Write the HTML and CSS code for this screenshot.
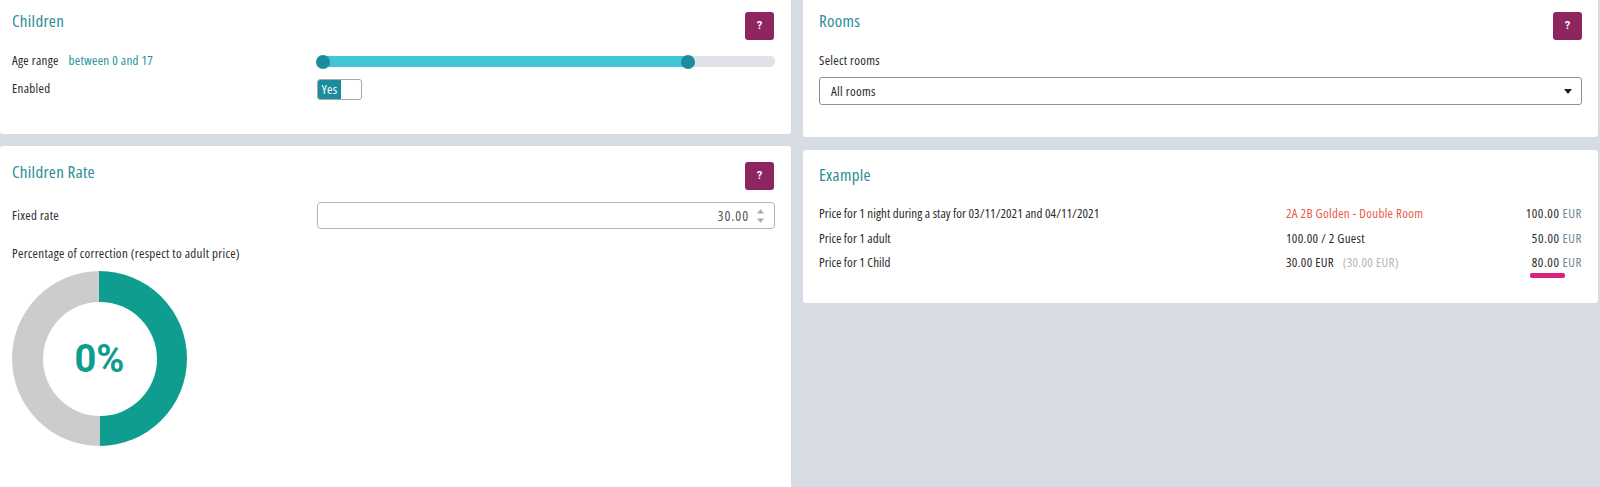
FILE: index.html
```html
<!DOCTYPE html>
<html lang="en">
<head>
<meta charset="utf-8">
<title>Children settings</title>
<link rel="stylesheet" href="styles.css">
</head>
<body>
<main class="page">
  <div class="col col-left">
    <section class="card card-children">
      <header class="card-head">
        <h2 class="card-title">Children</h2>
        <button class="help" type="button">?</button>
      </header>
      <div class="row row-age">
        <div class="row-label">Age range <span class="accent">between 0 and 17</span></div>
        <div class="slider"><div class="slider-fill"><span class="knob knob-start"></span><span class="knob knob-end"></span></div></div>
      </div>
      <div class="row row-enabled">
        <div class="row-label">Enabled</div>
        <div class="toggle"><span class="toggle-on">Yes</span></div>
      </div>
    </section>
    <section class="card card-rate">
      <header class="card-head">
        <h2 class="card-title">Children Rate</h2>
        <button class="help" type="button">?</button>
      </header>
      <div class="row row-fixed">
        <div class="row-label">Fixed rate</div>
        <div class="number-input"><span class="number-value">30.00</span>
          <svg class="spinner" width="9" height="16" viewBox="0 0 9 16"><path d="M4.5 1 8 5.5H1z" fill="#a9adb3"/><path d="M1 10.500H8L4.500 15z" fill="#a9adb3"/></svg>
        </div>
      </div>
      <p class="pct-label">Percentage of correction (respect to adult price)</p>
      <div class="donut"><div class="donut-hole">0%</div></div>
    </section>
  </div>
  <div class="col col-right">
    <section class="card card-rooms">
      <header class="card-head">
        <h2 class="card-title">Rooms</h2>
        <button class="help" type="button">?</button>
      </header>
      <div class="rooms-label">Select rooms</div>
      <div class="select"><span>All rooms</span>
        <svg class="caret" width="8" height="5" viewBox="0 0 8 5"><path d="M0 0H8L4 5z" fill="#222"/></svg>
      </div>
    </section>
    <section class="card card-example">
      <h2 class="card-title">Example</h2>
      <div class="price-grid">
        <div class="desc">Price for 1 night during a stay for 03/11/2021 and 04/11/2021</div>
        <div class="mid room">2A 2B Golden - Double Room</div>
        <div class="amount">100.00 <span class="cur">EUR</span></div>
        <div class="desc">Price for 1 adult</div>
        <div class="mid">100.00 / 2 Guest</div>
        <div class="amount">50.00 <span class="cur">EUR</span></div>
        <div class="desc">Price for 1 Child</div>
        <div class="mid">30.00 EUR <span class="muted">(30.00 EUR)</span></div>
        <div class="amount"><span class="marked">80.00</span> <span class="cur">EUR</span></div>
      </div>
    </section>
  </div>
</main>
</body>
</html>
```
FILE: styles.css
```css
* { box-sizing: border-box; }
html, body { margin: 0; height: 100%; }
body {
  background: #d7dbe3;
  color: #2b2b2b;
  font-family: "Open Sans", "Liberation Sans", sans-serif;
  font-stretch: condensed;
  font-size: 13px;
  letter-spacing: 0.3px;
  overflow: hidden;
}
.page { display: flex; gap: 12px; height: 487px; padding-right: 2px; }
.col { display: flex; flex-direction: column; }
.col-left { width: 791px; gap: 12px; }
.col-right { width: 795px; gap: 13px; }
.card { background: #fff; border-radius: 0 0 3px 3px; }
.card-children { height: 134px; padding: 12px 15px 0 12px; }
.card-rate { flex: 1; padding: 16px 15px 0 12px; border-radius: 3px 3px 0 0; }
.card-rooms { height: 137px; padding: 12px 16px 0 16px; }
.card-example { height: 153px; padding: 14px 16px 0 16px; border-radius: 3px; }
.card-head { display: flex; justify-content: space-between; align-items: flex-start; }
.card-children .help, .card-rate .help { margin-right: 2px; }
.card-title { margin: 0; font-weight: 400; font-size: 17px; line-height: 21px; color: #2a8d96; }
.card-children .card-title, .card-rooms .card-title { margin-top: -2px; }
.card-rate .card-title { margin-top: -1px; }
.help {
  width: 29px; height: 28px; padding: 0;
  border: 0; border-radius: 3px;
  background: #8f2560; color: #fff;
  font: 700 11px/28px "Roboto", sans-serif;
}
.row { display: flex; align-items: center; }
.row-label { width: 305px; padding-bottom: 2px; }
.accent { margin-left: 7px; color: #23909a; }
.row-age { height: 24px; margin-top: 9px; }
.row-enabled { height: 24px; margin-top: 4px; }
.slider { width: 458px; height: 11px; background: #dfe2e8; border-radius: 5px; }
.slider-fill { position: relative; width: 371px; height: 100%; background: #40c4d6; border-radius: 5px 0 0 5px; }
.knob { position: absolute; top: -1px; width: 14px; height: 14px; border-radius: 50%; background: #1c8b9b; }
.knob-start { left: -1px; }
.knob-end { right: -7px; }
.toggle { width: 45px; height: 21px; border: 1px solid #a9a9a9; border-radius: 3px; background: #fff; overflow: hidden; }
.toggle-on { display: block; width: 23px; height: 100%; background: #1c8b9b; color: #fff; line-height: 19px; text-align: center; }
.row-fixed { margin-top: 12px; }
.number-input {
  display: flex; align-items: center; justify-content: flex-end; gap: 7px;
  width: 458px; height: 27px; padding-right: 9px;
  border: 1px solid #b4b4b4; border-radius: 4px; color: #555;
}
.number-value { font-size: 14px; letter-spacing: 0.9px; }
.pct-label { margin: 16px 0 0; line-height: 16px; }
.donut {
  display: flex; align-items: center; justify-content: center;
  width: 175px; height: 175px; margin: 10px 0 0;
  border-radius: 50%;
  background: conic-gradient(#0f9d8f 0 50%, #cccccc 50% 100%);
}
.donut-hole {
  display: flex; align-items: center; justify-content: center;
  width: 114px; height: 114px; border-radius: 50%; background: #fff;
  color: #0f9d8f; font: 700 38px "Roboto", sans-serif; letter-spacing: 0;
}
.rooms-label { margin-top: 12px; line-height: 16px; }
.select {
  display: flex; align-items: center; justify-content: space-between;
  height: 28px; margin-top: 9px; padding: 0 9px 0 11px;
  border: 1px solid #8f8f8f; border-radius: 3px;
}
.price-grid {
  display: grid; grid-template-columns: 467px 1fr auto;
  grid-auto-rows: 24.5px; align-items: center;
  margin-top: 16px;
}
.desc { letter-spacing: 0.05px; }
.mid { letter-spacing: 0.3px; }
.room { color: #ea5b45; }
.amount { text-align: right; letter-spacing: 0.55px; }
.cur { color: #6f8a92; }
.muted { margin-left: 6px; color: #b5b5b5; }
.marked { position: relative; }
.marked::after {
  content: ""; position: absolute; left: -2px; right: -5px; bottom: -7px;
  height: 5px; border-radius: 2px; background: #d6237f;
}
```
